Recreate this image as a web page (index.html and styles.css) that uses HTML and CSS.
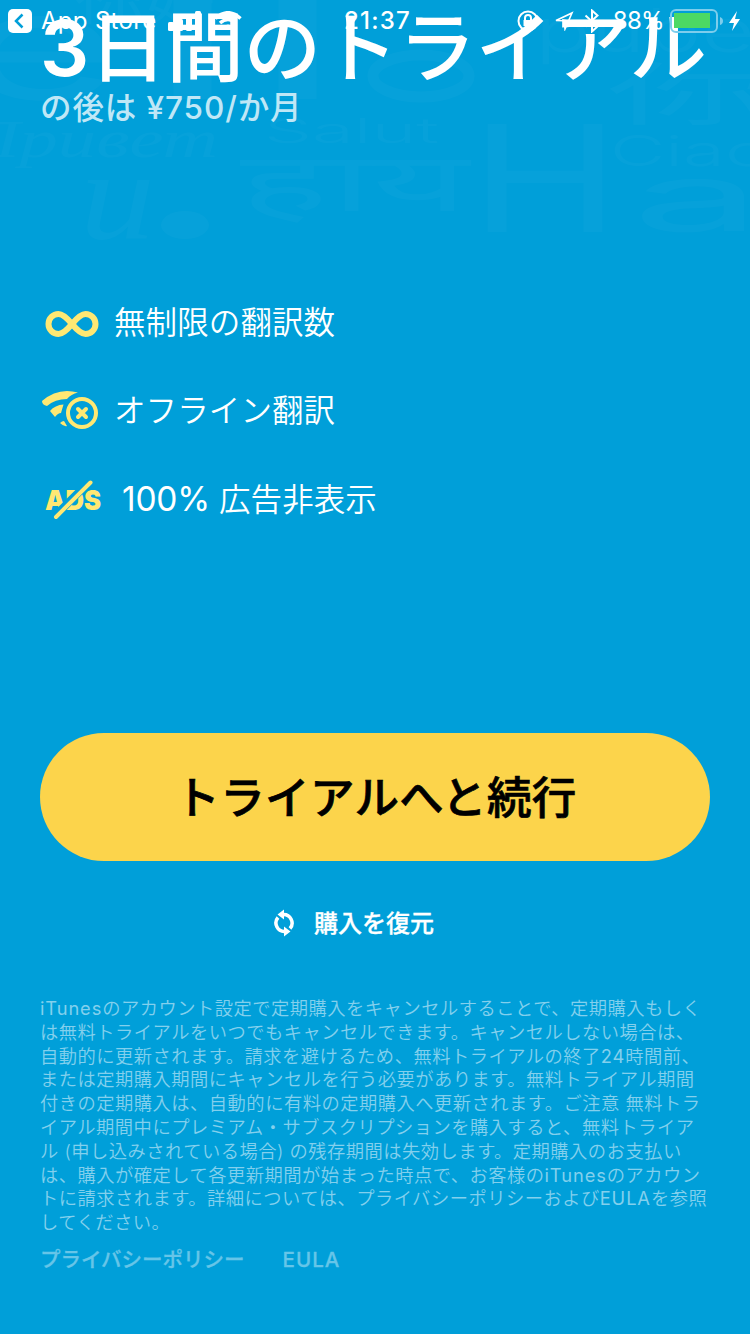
FILE: index.html
```
<!DOCTYPE html>
<html lang="ja">
<head>
    <meta charset="UTF-8">
    <meta name="viewport" content="width=device-width, initial-scale=1.0">
    <title>3日間のトライアル</title>
    <link rel="stylesheet" href="styles.css">
</head>
<body>
    <svg class="greetings" viewBox="0 0 750 260" aria-hidden="true">
        <text x="75" y="20" font-size="46" textLength="140" lengthAdjust="spacingAndGlyphs">你好</text>
        <text x="-40" y="99" font-size="150" textLength="160" lengthAdjust="spacingAndGlyphs">e</text>
        <text x="140" y="99" font-size="150" textLength="210" lengthAdjust="spacingAndGlyphs">ll</text>
        <ellipse cx="421" cy="76" rx="48" ry="21" fill="none" stroke="#fff" stroke-width="11"/>
        <text class="cursive" x="-36" y="157" font-size="52" textLength="254" lengthAdjust="spacingAndGlyphs">Привет</text>
        <text x="264" y="143" font-size="34" font-weight="300" textLength="175" lengthAdjust="spacingAndGlyphs">Salut</text>
        <text x="240" y="211" font-size="82" textLength="230" lengthAdjust="spacingAndGlyphs">हाय</text>
        <text class="cursive" x="80" y="239" font-size="128" textLength="75" lengthAdjust="spacingAndGlyphs">и</text>
        <ellipse cx="185" cy="225" rx="24" ry="14"/>
        <text x="470" y="232" font-size="149" textLength="150" lengthAdjust="spacingAndGlyphs">H</text>
        <text x="632" y="231" font-size="94" textLength="130" lengthAdjust="spacingAndGlyphs">a</text>
        <text x="610" y="166" font-size="42" font-weight="300" textLength="160" lengthAdjust="spacingAndGlyphs">Ciao</text>
        <text x="607" y="119" font-size="68" textLength="165" lengthAdjust="spacingAndGlyphs">你</text>
        <text x="535" y="52" font-size="60" font-weight="300" textLength="220" lengthAdjust="spacingAndGlyphs">pube</text>
    </svg>

    <header class="status-bar">
        <div class="status-left">
            <svg width="24" height="24" viewBox="0 0 24 24">
                <rect width="24" height="24" rx="5" fill="#fff"/>
                <path d="M14.500 5.500 8 12l6.500 6.500" fill="none" stroke="#009fd9" stroke-width="2.500"/>
            </svg>
            <span class="back-app">App Store</span>
            <svg class="signal" width="34" height="20" viewBox="0 0 34 20" fill="#fff">
                <rect y="11" width="6" height="9" rx="1.500"/>
                <rect x="9" y="8" width="6" height="12" rx="1.500"/>
                <rect x="18" y="4" width="6" height="16" rx="1.500"/>
                <rect x="27" width="6" height="20" rx="1.500"/>
            </svg>
            <svg class="wifi" width="28" height="20" viewBox="0 0 28 20" fill="none" stroke="#fff" stroke-width="3.500">
                <path d="M1.500 7.500Q14-4 26.500 7.500M6 12q8-7 16 0"/>
                <path d="M10 15q4-3 8 0l-4 4z" fill="#fff" stroke="none"/>
            </svg>
        </div>
        <span class="clock">21:37</span>
        <div class="status-right">
            <svg width="22" height="22" viewBox="0 0 22 22" fill="none" stroke="#fff" stroke-width="2">
                <circle cx="11" cy="11" r="9.500"/>
                <path d="M8 10V8a3 3 0 0 1 6 0v2"/>
                <rect x="6.500" y="10" width="9" height="6" fill="#fff" stroke="none"/>
            </svg>
            <svg class="arrow" width="20" height="20" viewBox="0 0 20 20" fill="none" stroke="#fff" stroke-width="1.600">
                <path d="M2 9.500 18 2l-7 16-.8-8.200z"/>
            </svg>
            <svg class="bluetooth" width="16" height="24" viewBox="0 0 16 24" fill="none" stroke="#fff" stroke-width="2">
                <path d="m1.500 6.500 12 11L8 22.500v-21l5.500 5-12 11"/>
            </svg>
            <span class="percent">88%</span>
            <svg class="battery" width="72" height="24" viewBox="0 0 72 24">
                <rect x="1" y="1" width="46" height="22" rx="5" fill="none" stroke="#7dcdec" stroke-width="2"/>
                <rect x="4" y="4" width="36" height="15" fill="#4cd964"/>
                <path d="M50 8q3 1 3 4t-3 4z" fill="#7dcdec"/>
                <path d="m67 2-8 12h5l-2 8 8-12h-5z" fill="#fff"/>
            </svg>
        </div>
    </header>

    <main class="page">
        <h1 class="title"><span class="digit">3</span>日間のトライアル</h1>
        <p class="price">の後は ¥750/か月</p>

        <ul class="features">
            <li>
                <svg class="icon" width="64" height="48" viewBox="0 0 64 48" fill="none" stroke="#ffe873" stroke-width="6">
                    <path d="M32 24C27 18 23 14 18.500 14a10 10 0 0 0 0 20C23 34 27 30 32 24s9-10 13.500-10a10 10 0 0 1 0 20C41 34 37 30 32 24z"/>
                </svg>
                <span>無制限の翻訳数</span>
            </li>
            <li>
                <svg class="icon" width="64" height="48" viewBox="0 0 64 48">
                    <path d="M2 13Q18-1 38 4.500 31 6 27 11 15 11 7 18 2 17 2 13z" fill="#ffe873"/>
                    <path d="M10 23q5-6 13.500-6.500L21 25q-3 0-6 4zM20 35q2-2 4-2l3 5q-3 1-7-3z" fill="#ffe873"/>
                    <g fill="none" stroke="#ffe873">
                        <circle cx="42" cy="25" r="14" stroke-width="4"/>
                        <path d="m38 21 8 8m0-8-8 8" stroke-width="4" stroke-linecap="round"/>
                    </g>
                </svg>
                <span>オフライン翻訳</span>
            </li>
            <li>
                <svg class="icon" width="64" height="48" viewBox="0 0 64 48">
                    <text class="ads" x="5" y="34" textLength="56" lengthAdjust="spacingAndGlyphs">ADS</text>
                    <path d="m13 42 38-38" stroke="#009fd9" stroke-width="8"/>
                    <path d="m16 41 34.500-34.500" stroke="#ffe873" stroke-width="4" stroke-linecap="round"/>
                </svg>
                <span class="shifted"><span class="number">100%</span> 広告非表示</span>
            </li>
        </ul>

        <button class="continue">トライアルへと続行</button>

        <div class="restore">
            <svg width="22" height="28" viewBox="0 0 22 28">
                <path d="M10 5.500a8.500 8.500 0 0 1 7 14M12 22.500a8.500 8.500 0 0 1-7-14" fill="none" stroke="#fff" stroke-width="3.500"/>
                <path d="M11 .5v10L4.500 5.500zM11 17.500v10l6.500-5z" fill="#fff"/>
            </svg>
            <span>購入を復元</span>
        </div>

        <p class="legal">
            <span class="latin">iTunes</span>のアカウント設定で定期購入をキャンセルすることで、定期購入もしく<br>
            は無料トライアルをいつでもキャンセルできます。キャンセルしない場合は、<br>
            自動的に更新されます。請求を避けるため、無料トライアルの終了<span class="latin">24</span>時間前、<br>
            または定期購入期間にキャンセルを行う必要があります。無料トライアル期間<br>
            付きの定期購入は、自動的に有料の定期購入へ更新されます。ご注意 無料トラ<br>
            イアル期間中にプレミアム・サブスクリプションを購入すると、無料トライア<br>
            ル (申し込みされている場合) の残存期間は失効します。定期購入のお支払い<br>
            は、購入が確定して各更新期間が始まった時点で、お客様の<span class="latin">iTunes</span>のアカウン<br>
            トに請求されます。詳細については、プライバシーポリシーおよび<span class="latin">EULA</span>を参照<br>
            してください。
        </p>

        <nav class="links">
            <a href="#">プライバシーポリシー</a>
            <a class="eula" href="#">EULA</a>
        </nav>
    </main>
</body>
</html>
```
FILE: styles.css
```
* {
    box-sizing: border-box;
}
body {
    margin: 0;
    width: 750px;
    height: 1334px;
    overflow: hidden;
    background-color: #009fd9;
    color: #fff;
    font-family: Inter, "Noto Sans CJK JP", sans-serif;
}
svg {
    display: block;
    flex: none;
}
.greetings {
    position: absolute;
    top: 0;
    left: 0;
    width: 750px;
    height: 260px;
    fill: #fff;
    opacity: 0.024;
    font-family: Inter, "Noto Sans CJK JP", sans-serif;
}
.cursive {
    font-family: "Liberation Serif", serif;
    font-style: italic;
}
.status-bar {
    position: absolute;
    top: 0;
    left: 0;
    z-index: 1;
    display: grid;
    grid-template-columns: 1fr auto 1fr;
    align-items: center;
    width: 750px;
    height: 40px;
    padding: 1px 8px 0;
    font-size: 24px;
    line-height: 40px;
}
.status-left,
.status-right {
    display: flex;
    align-items: center;
}
.status-right {
    justify-content: flex-end;
}
.back-app {
    width: 118px;
    margin-left: 9px;
    letter-spacing: 0.3px;
}
.signal {
    margin-left: 9px;
}
.wifi {
    margin-left: 12px;
}
.clock {
    padding-left: 5px;
    font-weight: 500;
    letter-spacing: 1.2px;
}
.arrow {
    margin-left: 15px;
}
.bluetooth {
    margin-left: 10px;
}
.percent {
    margin: 0 6px 0 13px;
    letter-spacing: -0.7px;
}
.page {
    display: flex;
    flex-direction: column;
    padding: 4px 40px 0;
}
.title {
    margin: 0;
    font-size: 77.300px;
    font-weight: 500;
    line-height: 88px;
    white-space: nowrap;
}
.digit {
    font-weight: 600;
}
.price {
    margin: -5px 0 0;
    color: #bfe7f6;
    font-size: 31.500px;
    font-weight: 500;
    line-height: 42px;
    letter-spacing: 0.9px;
}
.features {
    display: flex;
    flex-direction: column;
    gap: 40px;
    margin: 171px 0 0;
    padding: 0;
    list-style: none;
}
.features li {
    display: flex;
    align-items: center;
    height: 48px;
    font-size: 31.500px;
    font-weight: 350;
    line-height: 48px;
    letter-spacing: 0.1px;
}
.features span {
    margin-top: -2px;
}
.icon {
    margin-right: 10px;
}
.ads {
    fill: #ffe873;
    font-size: 27px;
    font-weight: 900;
    letter-spacing: 0;
}
.shifted {
    margin-left: 8px;
}
.number {
    font-size: 33.500px;
    font-weight: 400;
    letter-spacing: -0.2px;
}
.continue {
    height: 128px;
    margin: 209px 0 0;
    padding: 0 0 5px 2px;
    border: 0;
    border-radius: 64px;
    background-color: #fcd44b;
    color: #000;
    font-family: inherit;
    font-size: 44.500px;
    font-weight: 500;
    letter-spacing: 0.4px;
    -webkit-text-stroke: 0.7px #000;
}
.restore {
    display: flex;
    align-items: center;
    gap: 19px;
    height: 36px;
    margin: 44px 0 0 233px;
    font-size: 24px;
    font-weight: 500;
    -webkit-text-stroke: 0.3px #fff;
}
.restore span {
    margin-top: -4px;
}
.legal {
    margin: 56px 0 0;
    color: #83d0ed;
    font-size: 18.300px;
    font-weight: 350;
    line-height: 23.800px;
    letter-spacing: 0.48px;
    white-space: nowrap;
}
.latin {
    font-weight: 400;
    letter-spacing: 0.9px;
}
.links {
    display: flex;
    gap: 38px;
    margin-top: 10px;
    font-size: 20.500px;
    font-weight: 500;
    line-height: 30px;
    -webkit-text-stroke: 0.3px #66c5e8;
}
.links a {
    color: #66c5e8;
    text-decoration: none;
}
.links .eula {
    letter-spacing: 1px;
}
```
